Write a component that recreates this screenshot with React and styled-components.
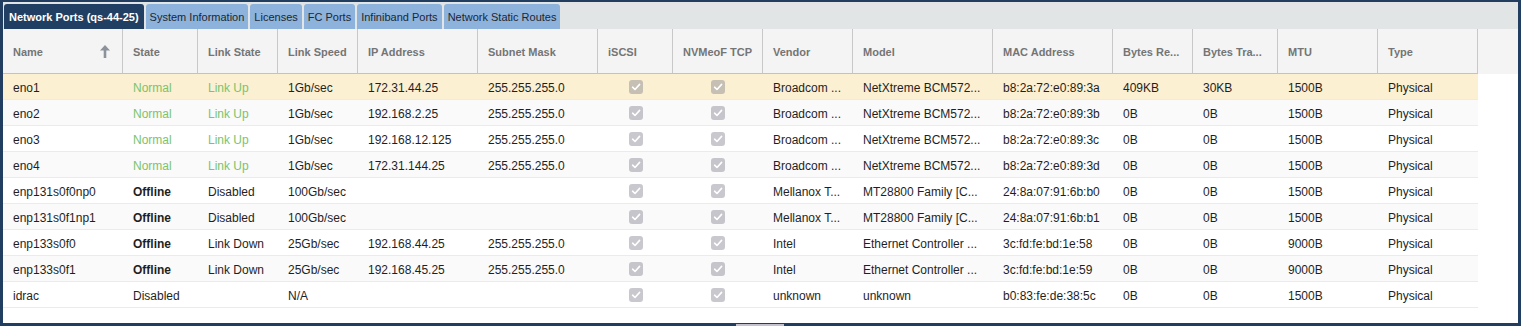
import React from 'react'
import styled, { createGlobalStyle } from 'styled-components'

const GlobalStyle = createGlobalStyle`
  html, body {
    margin: 0;
    padding: 0;
    background: #ffffff;
  }
  body {
    font-family: "Liberation Sans", Arial, sans-serif;
  }
`

const columns = [
  { key: 'name', label: 'Name', width: 120, sort: true },
  { key: 'state', label: 'State', width: 75 },
  { key: 'linkState', label: 'Link State', width: 80 },
  { key: 'speed', label: 'Link Speed', width: 80 },
  { key: 'ip', label: 'IP Address', width: 120 },
  { key: 'mask', label: 'Subnet Mask', width: 120 },
  { key: 'iscsi', label: 'iSCSI', width: 75, check: true },
  { key: 'nvme', label: 'NVMeoF TCP', width: 90, check: true },
  { key: 'vendor', label: 'Vendor', width: 90 },
  { key: 'model', label: 'Model', width: 140 },
  { key: 'mac', label: 'MAC Address', width: 120 },
  { key: 'rx', label: 'Bytes Re...', width: 80 },
  { key: 'tx', label: 'Bytes Tra...', width: 85 },
  { key: 'mtu', label: 'MTU', width: 100 },
  { key: 'type', label: 'Type', width: 100 },
]

const template = columns.map((c) => `${c.width}px`).join(' ')

const ports = [
  { name: 'eno1', state: 'Normal', linkState: 'Link Up', speed: '1Gb/sec', ip: '172.31.44.25', mask: '255.255.255.0', vendor: 'Broadcom ...', model: 'NetXtreme BCM572...', mac: 'b8:2a:72:e0:89:3a', rx: '409KB', tx: '30KB', mtu: '1500B', type: 'Physical' },
  { name: 'eno2', state: 'Normal', linkState: 'Link Up', speed: '1Gb/sec', ip: '192.168.2.25', mask: '255.255.255.0', vendor: 'Broadcom ...', model: 'NetXtreme BCM572...', mac: 'b8:2a:72:e0:89:3b', rx: '0B', tx: '0B', mtu: '1500B', type: 'Physical' },
  { name: 'eno3', state: 'Normal', linkState: 'Link Up', speed: '1Gb/sec', ip: '192.168.12.125', mask: '255.255.255.0', vendor: 'Broadcom ...', model: 'NetXtreme BCM572...', mac: 'b8:2a:72:e0:89:3c', rx: '0B', tx: '0B', mtu: '1500B', type: 'Physical' },
  { name: 'eno4', state: 'Normal', linkState: 'Link Up', speed: '1Gb/sec', ip: '172.31.144.25', mask: '255.255.255.0', vendor: 'Broadcom ...', model: 'NetXtreme BCM572...', mac: 'b8:2a:72:e0:89:3d', rx: '0B', tx: '0B', mtu: '1500B', type: 'Physical' },
  { name: 'enp131s0f0np0', state: 'Offline', linkState: 'Disabled', speed: '100Gb/sec', ip: '', mask: '', vendor: 'Mellanox T...', model: 'MT28800 Family [C...', mac: '24:8a:07:91:6b:b0', rx: '0B', tx: '0B', mtu: '1500B', type: 'Physical' },
  { name: 'enp131s0f1np1', state: 'Offline', linkState: 'Disabled', speed: '100Gb/sec', ip: '', mask: '', vendor: 'Mellanox T...', model: 'MT28800 Family [C...', mac: '24:8a:07:91:6b:b1', rx: '0B', tx: '0B', mtu: '1500B', type: 'Physical' },
  { name: 'enp133s0f0', state: 'Offline', linkState: 'Link Down', speed: '25Gb/sec', ip: '192.168.44.25', mask: '255.255.255.0', vendor: 'Intel', model: 'Ethernet Controller ...', mac: '3c:fd:fe:bd:1e:58', rx: '0B', tx: '0B', mtu: '9000B', type: 'Physical' },
  { name: 'enp133s0f1', state: 'Offline', linkState: 'Link Down', speed: '25Gb/sec', ip: '192.168.45.25', mask: '255.255.255.0', vendor: 'Intel', model: 'Ethernet Controller ...', mac: '3c:fd:fe:bd:1e:59', rx: '0B', tx: '0B', mtu: '9000B', type: 'Physical' },
  { name: 'idrac', state: 'Disabled', linkState: '', speed: 'N/A', ip: '', mask: '', vendor: 'unknown', model: 'unknown', mac: 'b0:83:fe:de:38:5c', rx: '0B', tx: '0B', mtu: '1500B', type: 'Physical' },
]

const tabs = [
  'Network Ports (qs-44-25)',
  'System Information',
  'Licenses',
  'FC Ports',
  'Infiniband Ports',
  'Network Static Routes',
]

const SortArrow = () => (
  <svg width="10" height="13" viewBox="0 0 10 13">
    <path d="M5 0 L10 5.5 L6.3 5.5 L6.3 13 L3.7 13 L3.7 5.5 L0 5.5 Z" fill="#8b929b" />
  </svg>
)

const Check = () => (
  <CheckBox>
    <svg width="10" height="10" viewBox="0 0 10 10">
      <path d="M1.6 5.2 L4 7.5 L8.6 2.4" fill="none" stroke="#ffffff" strokeWidth="1.6" strokeLinecap="round" strokeLinejoin="round" />
    </svg>
  </CheckBox>
)

const isGreen = (v) => v === 'Normal' || v === 'Link Up'

const App = () => {
  return (
    <>
      <GlobalStyle />
      <Frame>
        <TabStrip>
          {tabs.map((t, i) => (
            <Tab key={t} $active={i === 0}>{t}</Tab>
          ))}
        </TabStrip>
        <Grid>
          <HeaderRow>
            <HeaderCells>
              {columns.map((c) => (
                <HeaderCell key={c.key}>
                  <span>{c.label}</span>
                  {c.sort && <SortArrow />}
                </HeaderCell>
              ))}
            </HeaderCells>
            <HeaderFiller />
          </HeaderRow>
          {ports.map((p, i) => (
            <Row key={p.name} $selected={i === 0} $alt={i % 2 === 1}>
              {columns.map((c) =>
                c.check ? (
                  <Cell key={c.key} $center>
                    <Check />
                  </Cell>
                ) : (
                  <Cell
                    key={c.key}
                    $green={(c.key === 'state' || c.key === 'linkState') && isGreen(p[c.key])}
                    $bold={c.key === 'state' && p.state === 'Offline'}
                  >
                    {p[c.key]}
                  </Cell>
                )
              )}
            </Row>
          ))}
        </Grid>
        <ScrollThumb />
      </Frame>
    </>
  )
}

export default App

const Frame = styled.div`
  position: relative;
  box-sizing: border-box;
  height: 326px;
  width: 1521px;
  border: 3px solid #213d60;
  border-top-width: 2px;
  background: #ffffff;
  display: flex;
  flex-direction: column;
`

const TabStrip = styled.div`
  display: flex;
  align-items: flex-end;
  gap: 2px;
  height: 27px;
  padding-left: 1px;
  background: #e1e5e6;
  flex-shrink: 0;
`

const Tab = styled.div`
  height: 25px;
  box-sizing: border-box;
  padding: 0 ${(p) => (p.$active ? '5px' : '4px')};
  display: flex;
  align-items: center;
  font-size: 11px;
  font-weight: ${(p) => (p.$active ? 700 : 400)};
  color: ${(p) => (p.$active ? '#ffffff' : '#1e2630')};
  background: ${(p) => (p.$active ? '#213f63' : '#8db2db')};
  border-radius: 3px 3px 0 0;
  white-space: nowrap;
`

const Grid = styled.div`
  display: flex;
  flex-direction: column;
`

const HeaderRow = styled.div`
  display: flex;
  height: 45px;
  background: #f4f4f4;
`

const HeaderCells = styled.div`
  display: grid;
  grid-template-columns: ${template};
  border-bottom: 1px solid #c2c2c2;
`

const HeaderCell = styled.div`
  box-sizing: border-box;
  border-right: 1px solid #c8c8c8;
  padding: 1px 12px 0 10px;
  display: flex;
  align-items: center;
  justify-content: space-between;
  font-size: 11px;
  font-weight: 700;
  color: #757575;
  white-space: nowrap;
  overflow: hidden;
`

const HeaderFiller = styled.div`
  flex: 1;
  height: 44px;
`

const Row = styled.div`
  display: grid;
  grid-template-columns: ${template};
  width: max-content;
  height: 26px;
  box-sizing: border-box;
  border-bottom: 1px solid #ebebeb;
  background: ${(p) => (p.$selected ? '#fcf0d2' : p.$alt ? '#fafafa' : '#ffffff')};
`

const Cell = styled.div`
  display: flex;
  align-items: center;
  justify-content: ${(p) => (p.$center ? 'center' : 'flex-start')};
  padding: ${(p) => (p.$center ? '0' : '2px 10px 0')};
  font-size: 12px;
  color: ${(p) => (p.$green ? '#7ac46c' : '#1f1f1f')};
  font-weight: ${(p) => (p.$bold ? 700 : 400)};
  white-space: nowrap;
  overflow: hidden;
`

const CheckBox = styled.span`
  width: 14px;
  height: 14px;
  border-radius: 3px;
  background: rgba(118, 118, 132, 0.4);
  display: flex;
  align-items: center;
  justify-content: center;
`

const ScrollThumb = styled.div`
  position: absolute;
  left: 733px;
  bottom: -3px;
  width: 48px;
  height: 2px;
  background: #c3c3cf;
`
